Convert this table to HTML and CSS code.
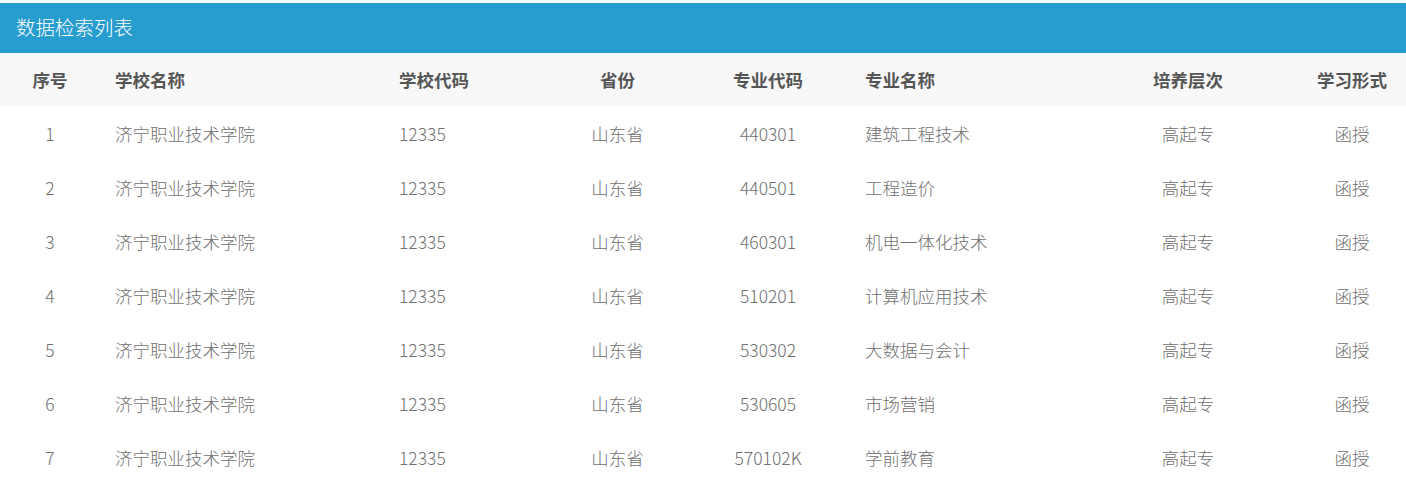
FILE: index.html
```html
<!DOCTYPE html>
<html lang="zh-CN">
<head>
<meta charset="utf-8">
<title>数据检索列表</title>
<link rel="stylesheet" href="styles.css">
</head>
<body>
<div class="panel">
  <div class="panel-title">数据检索列表</div>
  <table class="list">
    <colgroup>
      <col class="c1"><col class="c2"><col class="c3"><col class="c4"><col class="c5"><col class="c6"><col class="c7"><col class="c8">
    </colgroup>
    <thead>
      <tr>
        <th class="ctr">序号</th><th class="lft">学校名称</th><th class="lft">学校代码</th><th class="ctr">省份</th><th class="ctr">专业代码</th><th class="lft">专业名称</th><th class="ctr">培养层次</th><th class="ctr">学习形式</th>
      </tr>
    </thead>
    <tbody>
      <tr><td class="ctr">1</td><td class="lft">济宁职业技术学院</td><td class="lft">12335</td><td class="ctr">山东省</td><td class="ctr">440301</td><td class="lft">建筑工程技术</td><td class="ctr">高起专</td><td class="ctr">函授</td></tr>
      <tr><td class="ctr">2</td><td class="lft">济宁职业技术学院</td><td class="lft">12335</td><td class="ctr">山东省</td><td class="ctr">440501</td><td class="lft">工程造价</td><td class="ctr">高起专</td><td class="ctr">函授</td></tr>
      <tr><td class="ctr">3</td><td class="lft">济宁职业技术学院</td><td class="lft">12335</td><td class="ctr">山东省</td><td class="ctr">460301</td><td class="lft">机电一体化技术</td><td class="ctr">高起专</td><td class="ctr">函授</td></tr>
      <tr><td class="ctr">4</td><td class="lft">济宁职业技术学院</td><td class="lft">12335</td><td class="ctr">山东省</td><td class="ctr">510201</td><td class="lft">计算机应用技术</td><td class="ctr">高起专</td><td class="ctr">函授</td></tr>
      <tr><td class="ctr">5</td><td class="lft">济宁职业技术学院</td><td class="lft">12335</td><td class="ctr">山东省</td><td class="ctr">530302</td><td class="lft">大数据与会计</td><td class="ctr">高起专</td><td class="ctr">函授</td></tr>
      <tr><td class="ctr">6</td><td class="lft">济宁职业技术学院</td><td class="lft">12335</td><td class="ctr">山东省</td><td class="ctr">530605</td><td class="lft">市场营销</td><td class="ctr">高起专</td><td class="ctr">函授</td></tr>
      <tr><td class="ctr">7</td><td class="lft">济宁职业技术学院</td><td class="lft">12335</td><td class="ctr">山东省</td><td class="ctr">570102K</td><td class="lft">学前教育</td><td class="ctr">高起专</td><td class="ctr">函授</td></tr>
    </tbody>
  </table>
</div>
</body>
</html>
```

FILE: styles.css
```css
html, body {
  margin: 0;
  padding: 0;
  background: #ffffff;
}
body {
  font-family: "Noto Sans CJK SC", "Noto Sans", sans-serif;
  padding-top: 3px;
}
.panel {
  width: 1406px;
}
.panel-title {
  height: 50px;
  line-height: 48px;
  background: #279cce;
  color: #ffffff;
  font-size: 19.5px;
  font-weight: 300;
  padding-left: 16px;
  box-sizing: border-box;
}
.list {
  width: 1406px;
  border-collapse: collapse;
  table-layout: fixed;
}
.c1 { width: 100px; }
.c2 { width: 284px; }
.c3 { width: 165px; }
.c4 { width: 137px; }
.c5 { width: 164px; }
.c6 { width: 228px; }
.c7 { width: 220px; }
.c8 { width: 108px; }
.list th, .list td {
  height: 52px;
  padding: 0 0 2px 0;
  font-size: 17.5px;
  vertical-align: middle;
  white-space: nowrap;
}
.list thead tr {
  background: #f8f8f8;
}
.list th {
  font-weight: bold;
  color: #555555;
}
.list td {
  color: #707070;
  font-weight: 300;
}
.ctr { text-align: center; }
.lft { text-align: left; padding-left: 15px !important; }
```
